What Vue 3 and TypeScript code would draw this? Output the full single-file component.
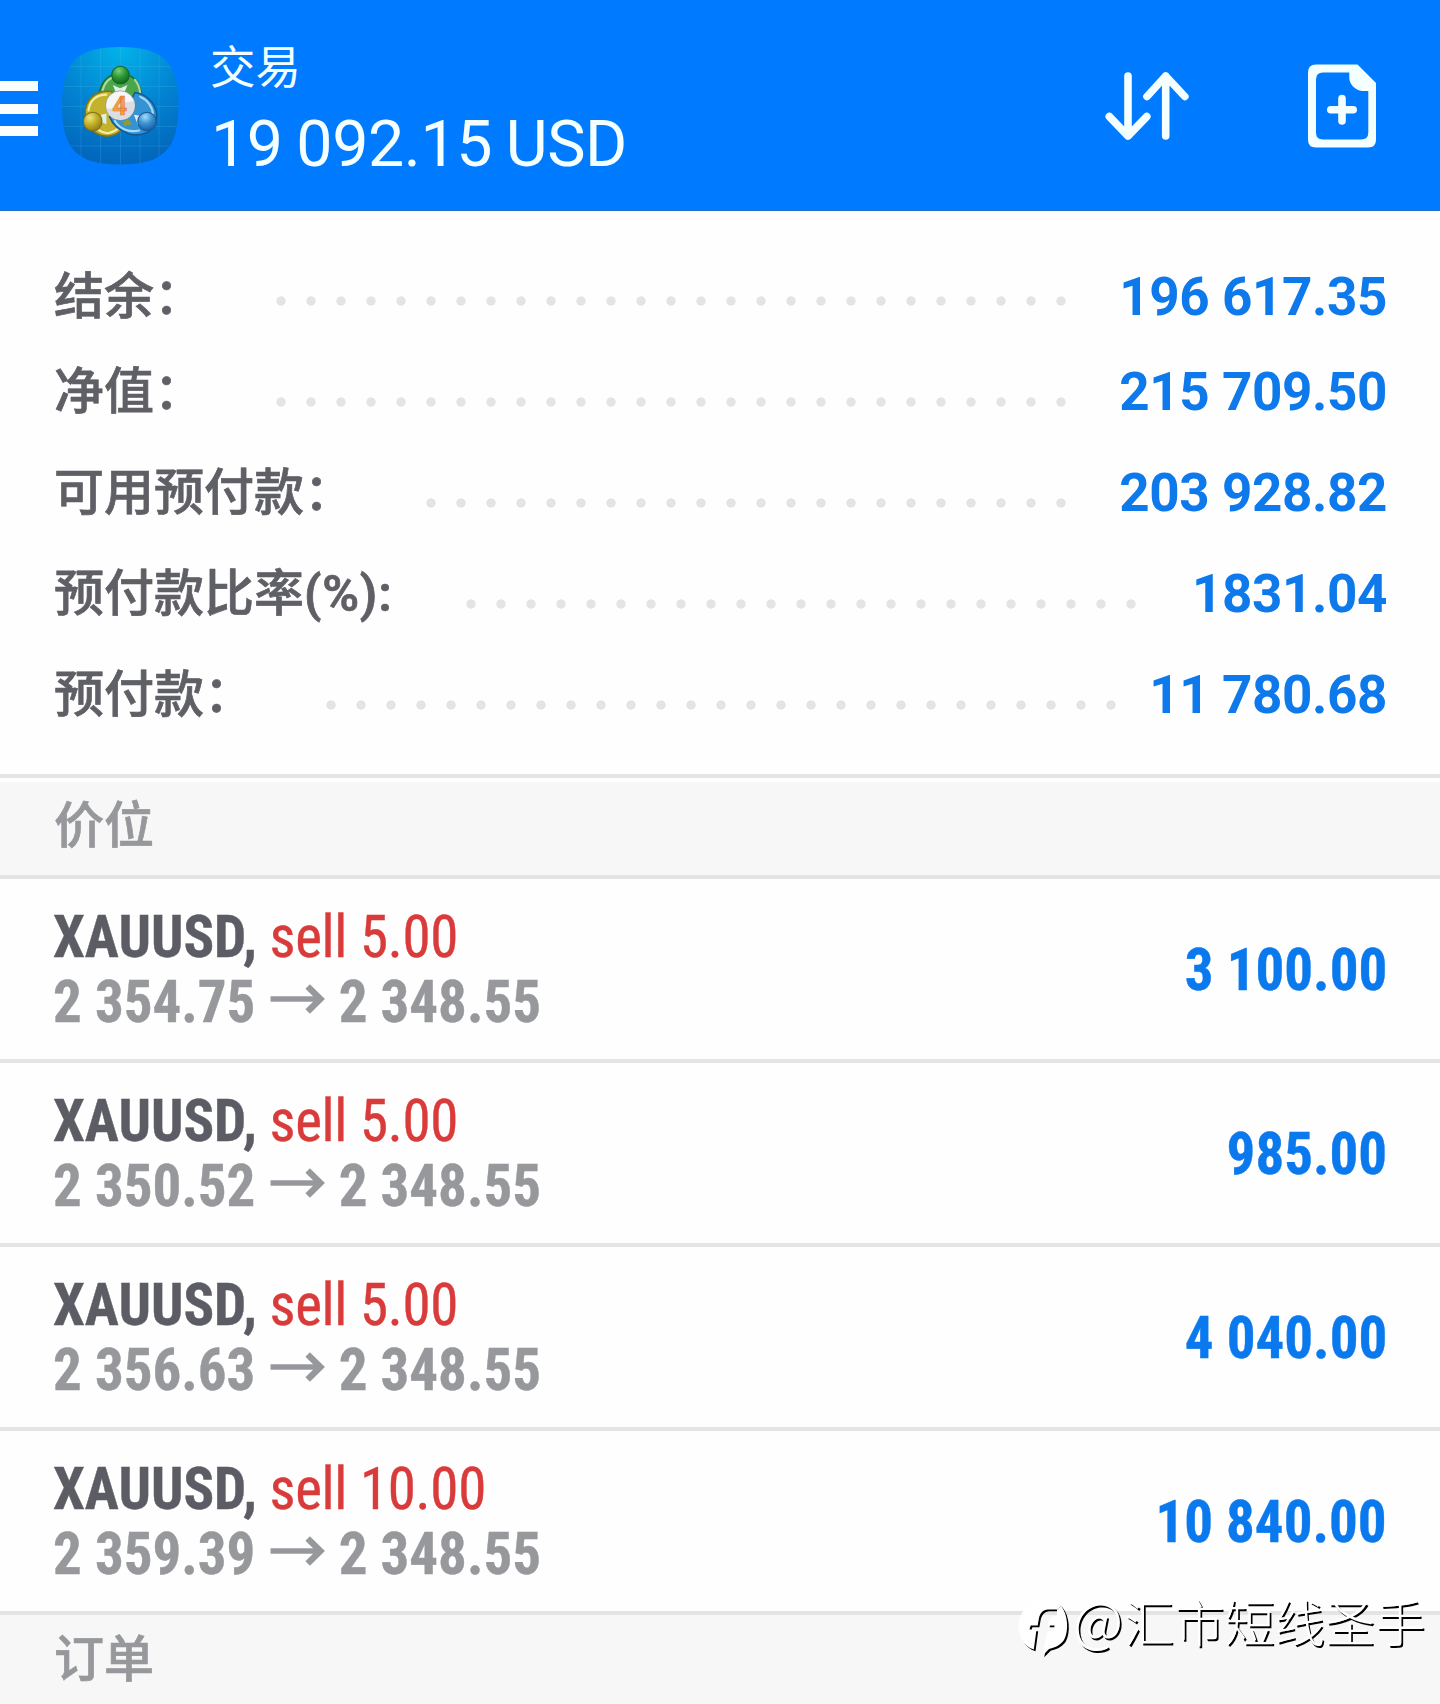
<script setup lang="ts">
import { ref } from "vue";

type SummaryRow = {
  label: string;
  suffix?: string;
  value: string;
  dots: number;
  dotsEnd: number;
}

type Position = {
  symbol: string;
  side: string;
  volume: string;
  open: string;
  current: string;
  profit: string;
}

const total = ref<string>("19 092.15 USD")

// dotsEnd: distance from the last dot to the right edge of the row
const summary = ref<SummaryRow[]>([
  { label: "结余：", value: "196 617.35", dots: 27, dotsEnd: 320 },
  { label: "净值：", value: "215 709.50", dots: 27, dotsEnd: 320 },
  { label: "可用预付款：", value: "203 928.82", dots: 22, dotsEnd: 320 },
  { label: "预付款比率", suffix: "(%):", value: "1831.04", dots: 23, dotsEnd: 250 },
  { label: "预付款：", value: "11 780.68", dots: 27, dotsEnd: 270 },
])

const positions = ref<Position[]>([
  { symbol: "XAUUSD,", side: "sell", volume: "5.00", open: "2 354.75", current: "2 348.55", profit: "3 100.00" },
  { symbol: "XAUUSD,", side: "sell", volume: "5.00", open: "2 350.52", current: "2 348.55", profit: "985.00" },
  { symbol: "XAUUSD,", side: "sell", volume: "5.00", open: "2 356.63", current: "2 348.55", profit: "4 040.00" },
  { symbol: "XAUUSD,", side: "sell", volume: "10.00", open: "2 359.39", current: "2 348.55", profit: "10 840.00" },
])
</script>

<template>
<div class="page">
  <header class="header">
    <div class="menu">
      <span></span>
      <span></span>
      <span></span>
    </div>
    <svg class="logo" viewBox="0 0 140 140">
      <defs>
        <radialGradient id="bg" cx="0.5" cy="0" r="1.05">
          <stop offset="0" stop-color="#02b4ea" />
          <stop offset="0.5" stop-color="#0284d2" />
          <stop offset="1" stop-color="#0262b8" />
        </radialGradient>
        <radialGradient id="greenHead" cx="0.4" cy="0.25" r="0.75">
          <stop offset="0" stop-color="#7fce74" />
          <stop offset="0.5" stop-color="#2f9a35" />
          <stop offset="1" stop-color="#0f6a20" />
        </radialGradient>
        <radialGradient id="yellowHead" cx="0.35" cy="0.3" r="0.75">
          <stop offset="0" stop-color="#eee57c" />
          <stop offset="0.5" stop-color="#c2b02a" />
          <stop offset="1" stop-color="#8f7d12" />
        </radialGradient>
        <radialGradient id="blueHead" cx="0.4" cy="0.25" r="0.75">
          <stop offset="0" stop-color="#a5dcf8" />
          <stop offset="0.5" stop-color="#3a93d2" />
          <stop offset="1" stop-color="#145fa6" />
        </radialGradient>
        <clipPath id="tile">
          <path d="M70 12C113 12 128.500 27 128.500 70.700C128.500 114 113 129.500 70 129.500C27 129.500 12 114 12 70.700C12 27 27 12 70 12Z" />
        </clipPath>
      </defs>
      <g clip-path="url(#tile)">
        <rect x="12" y="12" width="117" height="118" fill="url(#bg)" />
        <path d="M31 12V130M50.500 12V130M70.500 12V130M90 12V130M109 12V130M12 31.500H129M12 51.500H129M12 71.500H129M12 91.500H129M12 111H129" stroke="#5cc4f0" stroke-opacity="0.2" />
      </g>
      <g stroke-linecap="round" transform="translate(-3.700 -3.700) scale(1.055)">
        <!-- green, yellow and blue figures around the badge -->
        <path d="M51 78C46 60 52 41 70 40C89 41 96 62 86 80L74 72H62Z" fill="#4aa648" stroke="#1d6d2c" stroke-width="1.500" />
        <path d="M53 64C52 52 58 44 66 43M84 46C89 52 91 62 87 71" fill="none" stroke="#a9dba0" stroke-width="2" />
        <path d="M62 57C46 55 36 66 37 79C39 94 50 101 61 99C67 98 71 95 74 90L66 78Z" fill="#c3b32c" stroke="#7e741a" stroke-width="1.500" />
        <path d="M40 75C41 66 47 60 57 60M50 94C56 98 63 97 68 92" fill="none" stroke="#f3edaa" stroke-width="2" />
        <path d="M84 58C98 60 107 73 104 85C101 97 88 100 78 97C69 94 63 89 60 81L76 74Z" fill="#3592d3" stroke="#125898" stroke-width="1.500" />
        <path d="M65 85C70 93 79 96 88 94M89 62C96 65 101 72 101 79" fill="none" stroke="#a6dbf8" stroke-width="2" />
        <path d="M72 86L78 83L81 88L74 90Z" fill="#8a9a3c" />
        <path d="M63 51L70 54L77 51L74 58H66ZM52 79L57 78V88L52 86ZM83 79L89 80L87 89Z" fill="#dfeee9" />
        <circle cx="70.300" cy="41.500" r="8.300" fill="url(#greenHead)" stroke="#17642a" />
        <circle cx="44" cy="85.500" r="8.800" fill="url(#yellowHead)" stroke="#80701c" />
        <circle cx="95.500" cy="85.500" r="8.800" fill="url(#blueHead)" stroke="#155b99" />
      </g>
      <circle cx="70.300" cy="70.500" r="14.700" fill="#f6f6f7" stroke="#64706b" stroke-opacity="0.500" />
      <path d="M56.300 73C62 75 69 72 72 68L84 66C87 77 79 85 70 84.500C62 84 57 79 56.300 73Z" fill="#dcdde0" />
      <text class="logo-digit" x="69.700" y="79.500" text-anchor="middle">4</text>
    </svg>
    <div class="titles">
      <div class="title">交易</div>
      <div class="total">{{ total }}</div>
    </div>
    <svg class="sort-icon" viewBox="0 0 84 70" fill="none" stroke="currentColor" stroke-width="7.600" stroke-linecap="round" stroke-linejoin="round">
      <path d="M23 4V64M4.300 44.500L23 64L41.800 44.500" />
      <path d="M60.700 64V4M42 24.500L60.700 4L79.800 24.500" />
    </svg>
    <svg class="order-icon" viewBox="0 0 68 84">
      <path fill="currentColor" fill-rule="evenodd" d="M8 0.500H49.500L68 19V76Q68 83.500 60 83.500H8Q0 83.500 0 76V8.500Q0 0.500 8 0.500ZM15 8.500Q8 8.500 8 15.500V68.500Q8 75.500 15 75.500H53Q60.300 75.500 60.300 68.500V27H54C47 26 41.300 20 41.300 14V8.500Z" />
      <path d="M22.800 45.700H45.200M34 34.500V57" stroke="currentColor" stroke-width="7.600" stroke-linecap="round" />
    </svg>
  </header>

  <section class="summary">
    <div v-for="row in summary" :key="row.label" class="summary-row">
      <span class="summary-label">{{ row.label }}<span v-if="row.suffix" class="suffix">{{ row.suffix }}</span></span>
      <span class="dots" :style="{ width: `${row.dots * 30}px`, marginRight: `${row.dotsEnd}px` }"></span>
      <span class="summary-value">{{ row.value }}</span>
    </div>
  </section>

  <div class="section-title section-title-first">价位</div>

  <div v-for="(item, index) in positions" :key="index" class="position">
    <div class="position-info">
      <div class="line"><span class="symbol">{{ item.symbol }}</span> <span class="side">{{ item.side }} {{ item.volume }}</span></div>
      <div class="line prices">
        <span>{{ item.open }}</span>
        <svg class="arrow" viewBox="0 0 55 32" preserveAspectRatio="none" fill="none" stroke="currentColor">
          <path d="M0 16H50" stroke-width="5.600" />
          <path d="M37.300 3.500L50 16L37.300 28.500" stroke-width="6.400" />
        </svg>
        <span>{{ item.current }}</span>
      </div>
    </div>
    <div class="profit">{{ item.profit }}</div>
  </div>

  <div class="section-title section-title-last">订单</div>

  <div class="watermark">
    <svg class="watermark-logo" viewBox="0 0 54 62">
      <defs>
        <g id="mark">
          <path d="M39 11.500H30C25 12 22 15 21 20L19.700 27.500H12.700L11.500 31.500H18.500L15.800 51.500C5 48 0.500 38 0.500 28C1 13 12 2 27 2C34 2 40 5 43 8Z" />
          <path d="M43 8C50 16 51 33 46 42C42 48 35 50 31 51L24.500 57.500L26 50L29.500 33H36L36.500 27.500H30C31 21 33 18 39 17.500V11.500Z" />
        </g>
      </defs>
      <use href="#mark" fill="#000" transform="translate(1.700 1.700)" />
      <use href="#mark" fill="#fff" />
    </svg>
    <span class="watermark-text"><span class="at">@</span>汇市短线圣手</span>
  </div>
</div>
</template>

<style>
body {
  margin: 0;
  background-color: #fefefe;
}
</style>

<style scoped>
.page {
  position: relative;
  width: 1440px;
  height: 1704px;
  overflow: hidden;
  background-color: #fefefe;
  font-family: Roboto, "Noto Sans CJK SC", sans-serif;
}

.header {
  display: flex;
  align-items: flex-start;
  box-sizing: border-box;
  height: 211px;
  background-color: #007aff;
  border-bottom: 1px solid #1a6fcf;
  color: #f4ffff;
}

.menu {
  display: flex;
  flex-direction: column;
  gap: 12.500px;
  width: 38px;
  padding-top: 81px;
}
.menu span {
  height: 10px;
  background-color: #fafffc;
}

.logo {
  width: 140px;
  height: 140px;
  margin: 35px 0 0 12px;
}
.logo-digit {
  font: 700 26px Roboto, sans-serif;
  fill: #f5a04c;
  stroke: #d9792c;
  stroke-width: 0.6px;
}

.titles {
  flex: 1;
  padding: 39px 0 0 21px;
  white-space: nowrap;
}
.title {
  font-size: 45.500px;
  line-height: 60px;
  margin-left: -1px;
}
.total {
  font-size: 64.500px;
  line-height: 76px;
  margin-top: 7px;
  letter-spacing: -0.4px;
  word-spacing: -2px;
}

.sort-icon {
  width: 84px;
  height: 70px;
  margin: 72px 119px 0 0;
}
.order-icon {
  width: 68px;
  height: 84px;
  margin: 64px 64px 0 0;
}

.summary {
  box-sizing: border-box;
  height: 563px;
  padding-top: 40px;
}
.summary-row {
  position: relative;
  display: flex;
  align-items: center;
  justify-content: space-between;
  height: 101px;
  padding: 0 53px 0 54px;
  box-sizing: border-box;
}
.summary-label {
  font-size: 50px;
  font-weight: 500;
  line-height: 60px;
  color: #5f5f66;
  -webkit-text-stroke: 0.7px #5f5f66;
  padding-bottom: 21px;
}
.suffix {
  font-weight: 600;
  letter-spacing: 0.8px;
}
.summary-value {
  font-size: 53px;
  font-weight: 700;
  line-height: 60px;
  letter-spacing: -0.4px;
  color: #0d79ea;
  padding-bottom: 22px;
}
.summary-row:first-child .summary-label,
.summary-row:first-child .summary-value {
  transform: translateY(6px);
}
.dots {
  position: absolute;
  top: 45px;
  right: 44px;
  height: 10px;
  background: radial-gradient(circle at 15px 5px, #e4e4e4 4.300px, transparent 5px) 0 0 / 30px 10px repeat-x;
}

.section-title {
  box-sizing: border-box;
  padding-left: 54px;
  font-size: 50px;
  font-weight: 500;
  color: #97989b;
  -webkit-text-stroke: 0.7px #97989b;
  background-color: #f7f7f7;
}
.section-title-first {
  height: 105px;
  line-height: 96px;
  border-top: 4px solid #e4e4e4;
  border-bottom: 4px solid #e4e4e4;
  box-shadow: inset 0 4px #fefefe;
}
.section-title-last {
  height: 89px;
  line-height: 90px;
}

.position {
  display: flex;
  align-items: center;
  justify-content: space-between;
  box-sizing: border-box;
  height: 184px;
  padding: 0 53px;
  border-bottom: 4px solid #e4e4e4;
  font-family: "Roboto Condensed", Roboto, sans-serif;
  font-stretch: condensed;
  font-size: 60px;
  font-weight: 700;
  -webkit-text-stroke-width: 0.4px;
}
/* the condensed face is still slightly too wide */
.position-info {
  transform: scaleX(0.949);
  transform-origin: left center;
}
.line {
  line-height: 65px;
  white-space: nowrap;
}
.symbol {
  color: #5c5c64;
}
.side {
  margin-left: -0.5px;
  font-weight: 400;
  letter-spacing: -0.3px;
  color: #d93a3a;
}
.prices {
  display: flex;
  align-items: center;
  color: #97989c;
}
.arrow {
  width: 58px;
  height: 32px;
  margin: -5px 14px 0 15.800px;
}
.profit {
  color: #0b79ee;
  transform: scaleX(0.949);
  transform-origin: right center;
}

.watermark {
  position: absolute;
  left: 1018px;
  top: 1598px;
  display: flex;
  align-items: flex-start;
}
.watermark-logo {
  width: 54px;
  height: 62px;
}
.watermark-text {
  font-family: "Noto Sans CJK SC", sans-serif;
  font-weight: 300;
  font-size: 50.200px;
  line-height: 60px;
  margin: -8px 0 0 1px;
  color: #fff;
  text-shadow: 1.700px 1.700px 0 #000;
  white-space: nowrap;
}
.at {
  font-size: 55px;
  line-height: 1;
  margin-right: 1px;
}
</style>
